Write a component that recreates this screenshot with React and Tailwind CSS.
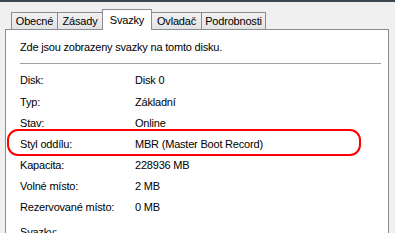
const tabs = [
  { label: 'Obecné', width: 'w-[47px]' },
  { label: 'Zásady', width: 'w-[46px]' },
  { label: 'Svazky', width: 'w-[50px]', active: true },
  { label: 'Ovladač', width: 'w-[51px]' },
  { label: 'Podrobnosti', width: 'w-[65px]' },
];

const rows = [
  ['Disk:', 'Disk 0'],
  ['Typ:', 'Základní'],
  ['Stav:', 'Online'],
  ['Styl oddílu:', 'MBR (Master Boot Record)'],
  ['Kapacita:', '228936 MB'],
  ['Volné místo:', '2 MB'],
  ['Rezervované místo:', '0 MB'],
];

export default function App() {
  return (
    <div
      className="relative w-[395px] h-[233px] overflow-hidden bg-[#f0f0f0] border-t-2 border-[#3c4651] text-[11px] tracking-[-0.2px] text-black"
      style={{ fontFamily: '"Liberation Sans", Arial, sans-serif' }}
    >
      <div className="flex items-end pl-[11px] pt-[6px] h-[27px]">
        {tabs.map((tab) =>
          tab.active ? (
            <div
              key={tab.label}
              className={`${tab.width} relative z-10 -mb-px -ml-px h-[21px] flex items-start justify-center pt-[2px] bg-white border border-b-0 border-[#898c95]`}
            >
              {tab.label}
            </div>
          ) : (
            <div
              key={tab.label}
              className={`${tab.width} -ml-px first:ml-0 h-[17px] flex items-center justify-center bg-gradient-to-b from-[#f2f2f2] to-[#e3e3e3] border border-b-0 border-[#898c95]`}
            >
              {tab.label}
            </div>
          )
        )}
      </div>

      <div className="ml-[5px] w-[384px] h-[210px] bg-white border border-b-0 border-[#898c95] pl-[14px] pr-[6px]">
        <p className="mt-[10px] leading-[14px]">Zde jsou zobrazeny svazky na tomto disku.</p>
        <div className="mt-[9px] mr-[1px] h-px bg-[#a0a0a0]" />
        <div className="mt-[6px] flex flex-col">
          {rows.map(([label, value]) => (
            <div key={label} className="flex h-[21.2px] items-center">
              <span className="w-[115px] shrink-0">{label}</span>
              <span>{value}</span>
            </div>
          ))}
        </div>
        {/* group box label, mostly below the fold */}
        <p className="mt-[7px] leading-[14px]">Svazky:</p>
      </div>

      <div className="absolute left-[7px] top-[127px] w-[354px] h-[27px] rounded-[11px] border-2 border-[#ff0000]" />
    </div>
  );
}
